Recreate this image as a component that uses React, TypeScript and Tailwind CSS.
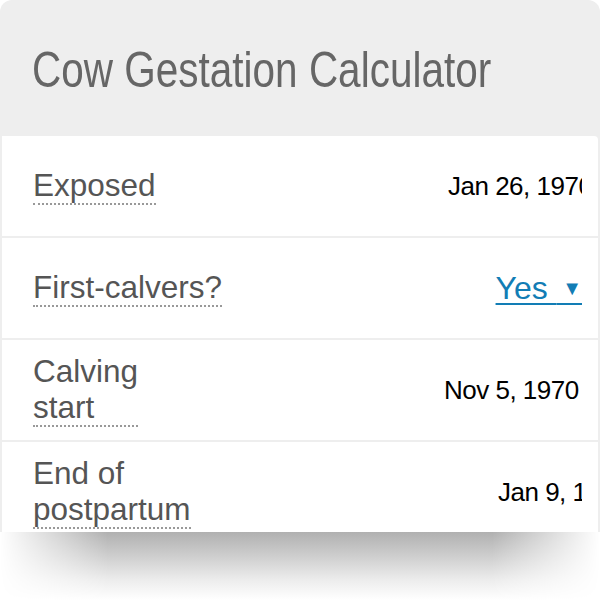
import React from 'react';

const sans = { fontFamily: '"Liberation Sans", Arial, sans-serif' };

interface RowProps {
  label: React.ReactNode;
  children: React.ReactNode;
}

const Row: React.FC<RowProps> = ({ label, children }) => (
  <div className="flex items-center justify-between h-[100px] bg-white pl-[31px] pr-[16px]">
    <span className="inline-block text-[31.5px] leading-[36px] text-[#555555] border-b-2 border-dotted border-[#999999]">
      {label}
    </span>
    {children}
  </div>
);

const DateValue: React.FC<{ text: string; width: string }> = ({ text, width }) => (
  <div className={`${width} overflow-hidden whitespace-nowrap text-[26px] tracking-[-0.5px] text-black`}>{text}</div>
);

export default function App() {
  return (
    <div className="w-[600px] h-[600px] bg-white overflow-hidden" style={sans}>
      <div className="rounded-t-[12px] bg-[#eeeeee] px-[2px] pb-0">
        <h1 className="h-[136px] pt-[45px] pl-[30px] text-[50px] leading-none text-[#666666] font-normal whitespace-nowrap">
          <span className="inline-block origin-left scale-x-[0.81]">Cow Gestation Calculator</span>
        </h1>
        <div className="flex flex-col gap-[2px] rounded-tr-[4px] overflow-hidden">
          <Row label="Exposed">
            <DateValue text="Jan 26, 1970" width="w-[134px]" />
          </Row>
          <Row label="First-calvers?">
            <span className="text-[32px] text-[#127db5] underline decoration-2 underline-offset-[4px] whitespace-nowrap">
              Yes <span className="text-[20px] relative top-[-4px]">{'\u00a0▼'}</span>
            </span>
          </Row>
          <Row label={<>Calving<br />start</>}>
            <DateValue text="Nov 5, 1970" width="w-[138px]" />
          </Row>
          <div className="h-[90px] overflow-hidden bg-white">
            <div className="flex items-center justify-between h-[100px] pl-[31px] pr-[16px]">
              <span className="inline-block text-[31.5px] leading-[36px] text-[#555555] border-b-2 border-dotted border-[#999999]">
                End of<br />postpartum
              </span>
              <DateValue text="Jan 9, 1970" width="w-[84px]" />
            </div>
          </div>
        </div>
      </div>
      <div className="h-[68px] bg-[linear-gradient(to_bottom,#b0b0b0,#d2d2d2_40%,#ececec_70%,#ffffff)] [mask-image:linear-gradient(to_right,transparent,black_18%,black_82%,transparent)]" />
    </div>
  );
}
